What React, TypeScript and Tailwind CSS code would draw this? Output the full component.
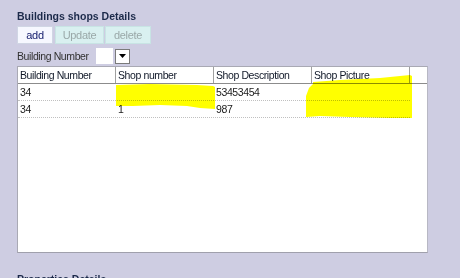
import React from "react";

const cols = [
  { label: "Building Number", w: "w-[98px]" },
  { label: "Shop number", w: "w-[98px]" },
  { label: "Shop Description", w: "w-[98px]" },
  { label: "Shop Picture", w: "w-[98px]" },
];

const rows = [
  ["34", "", "53453454", ""],
  ["34", "1", "987", ""],
];

export default function App() {
  return (
    <div className="relative w-[460px] h-[278px] overflow-hidden bg-[#cecde2] pl-[17px] pt-[10px] font-['Liberation_Sans',Arial,sans-serif]">
      <div className="text-[10.5px] leading-[13px] font-bold text-[#1c2a4a]">Buildings shops Details</div>

      <div className="mt-[3px] flex h-[18px]">
        <button className="w-[36px] h-[18px] bg-[#f6f8ff] border border-[#d0d6e4] text-[11px] tracking-[-0.3px] leading-[14px] text-[#1a2270]">add</button>
        <button className="ml-[2px] w-[49px] h-[18px] bg-[#d9f0f0] border border-[#c8e4e4] text-[11px] tracking-[-0.3px] leading-[14px] text-[#9aa8a8]">Update</button>
        <button className="ml-[1px] w-[46px] h-[18px] bg-[#d9f0f0] border border-[#c8e4e4] text-[11px] tracking-[-0.3px] leading-[14px] text-[#9aa8a8]">delete</button>
      </div>

      <div className="mt-[4px] flex items-center h-[16px]">
        <span className="text-[10.5px] tracking-[-0.4px] leading-[13px] text-[#303030] w-[79px]">Building Number</span>
        <div className="w-[17px] h-[16px] bg-white"></div>
        <div className="ml-[2px] w-[15px] h-[15px] bg-white border border-[#7a7a7a] flex items-center justify-center">
          <svg width="7" height="4" viewBox="0 0 7 4">
            <polygon points="0,0 7,0 3.5,4" fill="#000" />
          </svg>
        </div>
      </div>

      <div className="mt-[2px] w-[411px] h-[187px] bg-white border border-[#a9a9b4] border-r-[#b8b8c4] border-b-[#a0a0ac]">
        <div className="flex h-[17px] border-b border-[#8c8c8c]">
          {cols.map((c, i) => (
            <div
              key={i}
              className={`${c.w} h-[16px] border-r border-[#a0a0a0] pl-[2px] text-[10.5px] tracking-[-0.4px] leading-[16px] text-[#101828] whitespace-nowrap overflow-hidden`}
            >
              {c.label}
            </div>
          ))}
        </div>
        {rows.map((r, ri) => (
          <div key={ri} className="flex h-[17px] w-[392px] border-b border-dotted border-[#c0c0c0]">
            {r.map((v, ci) => (
              <div
                key={ci}
                className={`${cols[ci].w} pl-[2px] text-[10.5px] tracking-[-0.4px] leading-[17px] text-[#1a1a1a] whitespace-nowrap overflow-hidden`}
              >
                {v}
              </div>
            ))}
          </div>
        ))}
      </div>

      <div className="mt-[20px] text-[10.5px] leading-[13px] font-bold text-[#1c2a4a]">Properties Details</div>

      <svg
        className="absolute left-0 top-0 pointer-events-none mix-blend-multiply"
        width="460"
        height="278"
        viewBox="0 0 460 278"
      >
        <polygon
          points="116,85 150,84 197,85 213,86 215,87 215,109 200,108 187,106 160,105 133,106 116,106"
          fill="#ffff00"
        />
        <polygon
          points="313,82 340,80 380,78 410,75 412,76 412,118 390,118 350,117 320,116 306,117 306,96 309,88 313,84"
          fill="#ffff00"
        />
      </svg>
    </div>
  );
}
